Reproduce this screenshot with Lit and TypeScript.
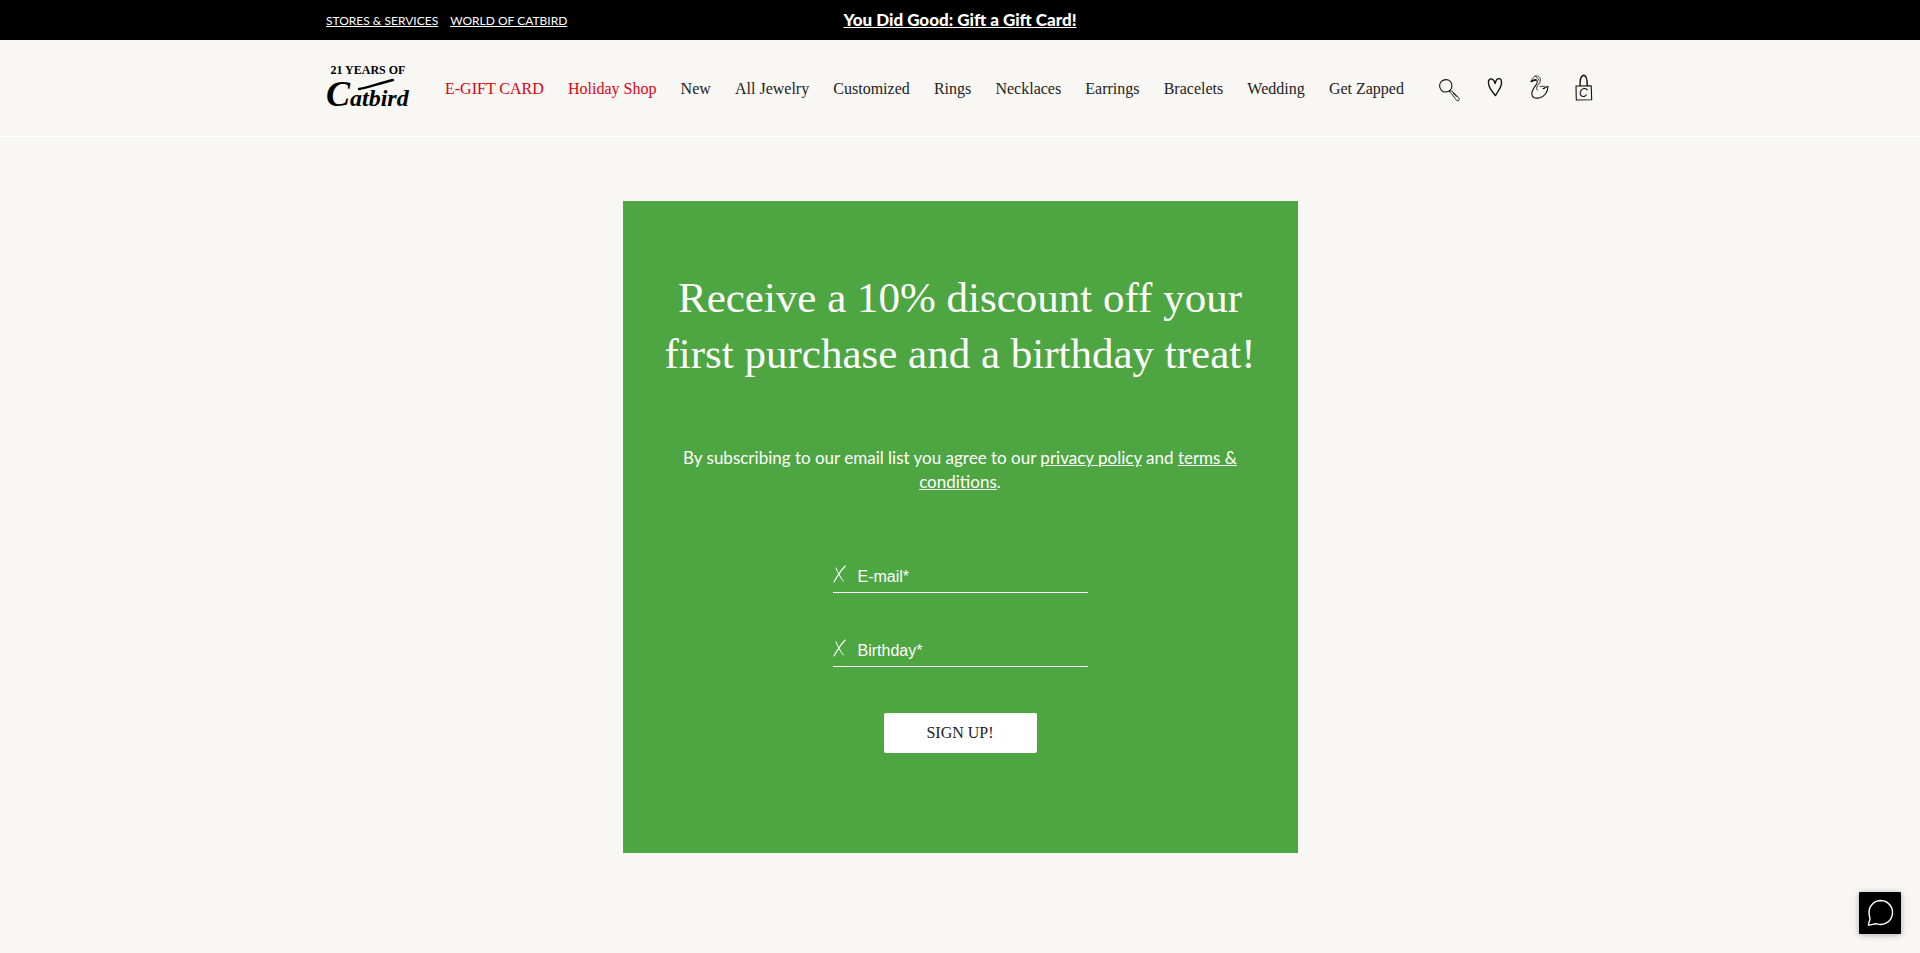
import { LitElement, html, css, svg } from "lit";
import { customElement, state } from "lit/decorators.js";

interface NavItem {
  label: string;
  sale?: boolean;
}

const NAV: NavItem[] = [
  { label: "E-GIFT CARD", sale: true },
  { label: "Holiday Shop", sale: true },
  { label: "New" },
  { label: "All Jewelry" },
  { label: "Customized" },
  { label: "Rings" },
  { label: "Necklaces" },
  { label: "Earrings" },
  { label: "Bracelets" },
  { label: "Wedding" },
  { label: "Get Zapped" },
];

const FIELDS = [
  { id: "email", label: "E-mail*", type: "email" },
  { id: "birthday", label: "Birthday*", type: "text" },
];

@customElement("site-header")
class SiteHeader extends LitElement {
  static styles = css`
    :host {
      display: block;
      font-family: "Liberation Serif", serif;
      color: #222;
    }
    a {
      color: inherit;
    }
    .wrap {
      width: min(1268px, 100% - 32px);
      margin: 0 auto;
    }
    .topbar {
      background: #000;
      color: #fff;
      font-family: Lato, sans-serif;
    }
    .topbar .wrap {
      display: grid;
      grid-template-columns: 1fr auto 1fr;
      align-items: center;
      min-height: 40px;
    }
    .services {
      display: flex;
      gap: 12px;
      font-size: 12px;
    }
    .promo {
      font-size: 17px;
      line-height: 20px;
      font-weight: 900;
    }
    .main {
      border-bottom: 1px solid #fff;
    }
    .main .wrap {
      display: flex;
      align-items: center;
      gap: 35px;
      min-height: 96px;
    }
    .logo {
      display: flex;
      flex-direction: column;
      align-items: center;
      width: 84px;
      text-decoration: none;
      color: #000;
    }
    .years {
      font-size: 12px;
      line-height: 12px;
      font-weight: bold;
      white-space: nowrap;
    }
    .mark {
      display: block;
      width: 84px;
      height: 36px;
      overflow: visible;
    }
    nav {
      flex: 1;
      display: flex;
      flex-wrap: wrap;
      justify-content: space-between;
      padding-top: 2px;
      font-size: 16px;
      line-height: 20px;
    }
    nav a {
      text-decoration: none;
      white-space: nowrap;
    }
    .sale {
      color: #e00010;
    }
    .tools {
      display: flex;
      align-items: center;
      gap: 27px;
    }
    .tools a {
      display: block;
    }
    .tools svg {
      display: block;
      height: 28px;
      fill: none;
      stroke: #111;
      stroke-linecap: round;
      stroke-linejoin: round;
      overflow: visible;
    }
    .initial {
      font: italic 12px "Liberation Sans", sans-serif;
      fill: #111;
      stroke: none;
    }
    .script {
      font: italic bold 24px "Liberation Serif", serif;
    }
    .cap {
      font-size: 36px;
    }
  `;

  private icon(label: string, width: number, body: unknown) {
    return html`<a href="#" aria-label=${label}
      ><svg width=${width} viewBox="0 0 ${width} 28" aria-hidden="true">${body}</svg></a
    >`;
  }

  render() {
    return html`
      <div class="topbar">
        <div class="wrap">
          <div class="services">
            <a href="#">STORES &amp; SERVICES</a>
            <a href="#">WORLD OF CATBIRD</a>
          </div>
          <a class="promo" href="#">You Did Good: Gift a Gift Card!</a>
        </div>
      </div>
      <header class="main">
        <div class="wrap">
          <a class="logo" href="#">
            <span class="years">21 YEARS OF</span>
            <svg class="mark" viewBox="0 0 84 36">
              <text class="script" x="0" y="30"><tspan class="cap">C</tspan>atbird</text>
              <path
                d="M33 13C38 13 54 7 67 4"
                fill="none"
                stroke="#000"
                stroke-width="2.4"
                stroke-linecap="round"
              />
            </svg>
          </a>
          <nav>
            ${NAV.map(
              (n) => html`<a href="#" class=${n.sale ? "sale" : ""}>${n.label}</a>`
            )}
          </nav>
          <div class="tools">
            ${this.icon(
              "Search",
              22,
              svg`<path stroke-width="1.1" d="M7 5.600C3.200 5.600 .6 8.400 .6 11.800C.6 15.500 3.300 18 6.700 18C10.500 18 13 15.300 12.900 11.700C12.800 8.200 10.500 5.600 7 5.600Z"/>
                <path stroke-width=".9" d="M10.400 17.600L11.900 16.600C14.500 18.500 18 21.500 20 24.200C21 26 19.200 27.600 17.500 26.300C15.500 24 13.500 20.300 10.400 17.600ZM14 19L17.500 22.800"/>`
            )}
            ${this.icon(
              "Wish list",
              15,
              svg`<path stroke-width="1.400" d="M7.200 9.500C7.800 6.200 9.700 4.400 11.700 4.700C14.100 5.600 13.800 9.600 12.700 12.500C11.500 15.500 9 19 7.500 21.600C5.500 19 2.500 15.800 1.200 12.200C.1 9 .1 6 2.300 5C4.500 4.400 6.500 6.500 7.200 9.500Z"/>`
            )}
            ${this.icon(
              "Account",
              19,
              svg`<path stroke-width="1.100" d="M1 7.500C3.200 7.200 3.500 5.800 5.500 5.700C7.800 5.800 7.800 8.500 6.200 10.700C4 13.500 1.600 16.300 1.800 20.300C2.200 24 5.500 24.500 9 24C14.500 23 17.800 18.200 18 12.500C15.800 12 15.200 14.500 13 14.600"/>
                <path stroke-width=".8" d="M2 5.800C3.200 2.500 6 1.300 8.300 2.300C11.300 4 11 7.300 8.800 10C6.500 12.800 5.400 15.500 7.700 16.200M5 1.800C6.500 3.200 8.300 4.200 9 6.300M10 12.500L14.500 12.200"/>
                <path stroke-width="1.800" d="M1.500 7L5.500 6"/>`
            )}
            ${this.icon(
              "Shopping bag",
              18,
              svg`<path stroke-width="1.100" d="M0 12L15.200 11.700L15.700 25.800L.3 26Z"/>
                <path stroke-width="1.400" d="M4.100 11.500C3.900 7.500 4.500 2 7.700 1.300C10.900 1.600 11.300 7.500 11.200 11.500"/>
                <text class="initial" x="3" y="23">C</text>`
            )}
          </div>
        </div>
      </header>
    `;
  }
}

@customElement("signup-card")
class SignupCard extends LitElement {
  static styles = css`
    :host {
      display: block;
      box-sizing: border-box;
      width: min(675px, 100%);
      padding: 69px 32px 100px;
      background: #4da642;
      color: #fff;
      text-align: center;
    }
    h1 {
      margin: 0 0 64px;
      font: 400 43px/56px "Liberation Serif", serif;
    }
    p {
      margin: 0 0 59px;
      padding: 0 20px;
      font: 400 17px/24px Lato, sans-serif;
    }
    a {
      color: inherit;
    }
    form {
      display: flex;
      flex-direction: column;
      align-items: center;
      gap: 34px;
    }
    .field {
      display: grid;
      grid-template-columns: 14px 1fr;
      column-gap: 11px;
      align-items: center;
      box-sizing: border-box;
      width: min(255px, 100%);
      min-height: 40px;
      padding-top: 8px;
      border-bottom: 1px solid #fff;
      font: 16px/20px "Liberation Sans", sans-serif;
      text-align: left;
    }
    .cross {
      display: block;
      width: 14px;
      height: 18px;
      margin-bottom: 6px;
      fill: none;
      stroke: #fff;
      stroke-linecap: round;
    }
    label,
    input {
      grid-area: 1 / 2;
    }
    label {
      pointer-events: none;
    }
    .filled {
      visibility: hidden;
    }
    input {
      width: 100%;
      padding: 0;
      border: 0;
      outline: 0;
      background: none;
      color: inherit;
      font: inherit;
    }
    button {
      width: 153px;
      height: 40px;
      margin-top: 12px;
      border: 0;
      border-radius: 2px;
      background: #fff;
      color: #222;
      font: 16px/20px "Liberation Serif", serif;
      cursor: pointer;
    }
  `;

  @state() private values: Record<string, string> = {};

  private setValue(id: string, e: Event) {
    this.values = { ...this.values, [id]: (e.target as HTMLInputElement).value };
  }

  render() {
    return html`
      <h1>Receive a 10% discount off your first purchase and a birthday treat!</h1>
      <p>
        By subscribing to our email list you agree to our
        <a href="#">privacy policy</a> and <a href="#">terms &amp; conditions</a>.
      </p>
      <form @submit=${(e: Event) => e.preventDefault()}>
        ${FIELDS.map(
          (f) => html`
            <div class="field">
              <svg class="cross" viewBox="0 0 14 18" aria-hidden="true">
                <path d="M12.300 1C8.300 5 4 11.500 1 17" stroke-width="1.100" />
                <path d="M3 3C4.500 7.500 7.500 12.500 10.300 16" stroke-width="1" />
              </svg>
              <input
                id=${f.id}
                type=${f.type}
                required
                @input=${(e: Event) => this.setValue(f.id, e)}
              />
              <label for=${f.id} class=${this.values[f.id] ? "filled" : ""}>${f.label}</label>
            </div>
          `
        )}
        <button type="submit">SIGN UP!</button>
      </form>
    `;
  }
}

@customElement("app-root")
class AppRoot extends LitElement {
  static styles = css`
    :host {
      display: block;
      min-height: 100vh;
      background: #f8f7f3;
    }
    main {
      display: flex;
      justify-content: center;
      padding: 64px 16px 100px;
    }
    .chat {
      position: fixed;
      right: 19px;
      bottom: 19px;
      width: 42px;
      height: 42px;
      padding: 0;
      border: 0;
      border-radius: 1px;
      background: #000;
      box-shadow: 0 1px 6px rgba(0, 0, 0, 0.3);
      cursor: pointer;
    }
    .chat svg {
      display: block;
      width: 42px;
      height: 42px;
      fill: none;
      stroke: #fff;
      stroke-width: 1.4;
      stroke-linejoin: round;
    }
  `;

  render() {
    return html`
      <site-header></site-header>
      <main><signup-card></signup-card></main>
      <button class="chat" aria-label="Open chat">
        <svg viewBox="0 0 42 42" aria-hidden="true">
          <path
            d="M22 8.500A12 12 0 1 1 17.500 31.800C15 31.500 12 33.500 9.500 33C8.800 32 10.800 29 11 27.500C11.100 26 10 23.500 10 20.500A12 12 0 0 1 22 8.500Z"
          />
        </svg>
      </button>
    `;
  }
}
